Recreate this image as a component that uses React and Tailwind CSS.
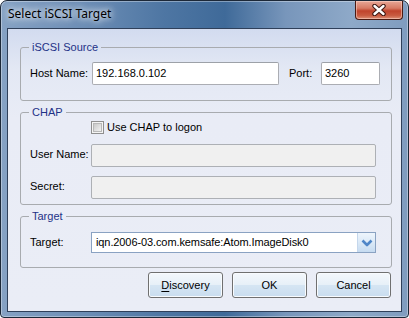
import React from 'react';

const sans = "font-['Liberation_Sans',Arial,sans-serif]";

function TextBox({ value, width, disabled }) {
  return (
    <div
      className={
        'h-[23px] rounded-[2px] border px-[3px] flex items-center text-[11px] text-black ' +
        width +
        (disabled
          ? ' border-[#adb0b5] bg-[#f0f0f0]'
          : ' border-[#abadb3] border-t-[#9da1a8] bg-white')
      }
    >
      {value}
    </div>
  );
}

function Group({ title, className, children }) {
  return (
    <fieldset className={'border border-[#a8abaf] rounded-[3px] ' + className}>
      <legend className="ml-[8px] px-[3px] text-[11px] leading-[14px] text-[#1e3287]">
        {title}
      </legend>
      {children}
    </fieldset>
  );
}

function DlgButton({ children }) {
  return (
    <button className="w-[75px] h-[26px] rounded-[3px] border border-[#707070] bg-[linear-gradient(180deg,#f4f8fc_0%,#e7f0f8_48%,#d5e5f3_52%,#c9ddef_100%)] shadow-[inset_0_0_0_1px_#f8fbfe] text-[11px] text-black">
      {children}
    </button>
  );
}

export default function App() {
  return (
    <div
      className={
        'w-[409px] h-[318px] flex flex-col border border-[#1c2838] rounded-t-[7px] rounded-b-[4px] bg-[linear-gradient(90deg,#86a2c4_0%,#6a8cb4_22%,#4e76a3_40%,#3f6a99_55%,#7896bb_70%,#8ea9c8_86%,#7f9cbf_100%)] shadow-[inset_0_0_0_1px_rgba(255,255,255,0.35)] ' +
        sans
      }
    >
      <div className="h-[27px] flex items-start shrink-0">
        <span className="ml-[7px] mt-[5px] text-[12px] leading-[16px] text-black font-['Noto_Sans',sans-serif] [text-shadow:0_0_6px_#ffffff,0_0_10px_rgba(255,255,255,0.9)]">
          Select iSCSI Target
        </span>
        <div className="ml-auto mr-[5px] w-[48px] h-[19px] rounded-b-[4px] border border-t-0 border-[#4a1a12] bg-[linear-gradient(180deg,#e8a797_0%,#d77a64_40%,#c0432c_55%,#c85a40_80%,#dc8f76_100%)] shadow-[inset_0_0_0_1px_rgba(255,220,210,0.5)] flex items-center justify-center">
          <svg width="14" height="12" viewBox="0 0 14 12">
            <path d="M2.5 2 L11.5 10 M11.5 2 L2.5 10" stroke="#3b1510" strokeWidth="4.4" strokeLinecap="round" />
            <path d="M2.5 2 L11.5 10 M11.5 2 L2.5 10" stroke="#ffffff" strokeWidth="2.4" strokeLinecap="round" />
          </svg>
        </div>
      </div>

      <div className="mx-[6px] mb-[5px] flex-1 flex flex-col border border-[#2f405a] bg-[linear-gradient(180deg,#d2dbef_0px,#e3e8f4_40px,#e9ecf6_90px,#eaedf6_100%)] pl-[12px] pr-[9px] pt-[11px]">
        <Group title="iSCSI Source" className="pt-[8px] pb-[15px]">
          <div className="flex items-center h-[23px] pl-[9px]">
            <span className="w-[62px] text-[11px]">Host Name:</span>
            <TextBox value="192.168.0.102" width="w-[187px]" />
            <span className="ml-[10px] w-[32px] text-[11px]">Port:</span>
            <TextBox value="3260" width="w-[59px]" />
          </div>
        </Group>

        <Group title="CHAP" className="mt-[4px] pt-[1px] pb-[5px]">
          <div className="flex items-center h-[14px] pl-[70px]">
            <span className="w-[13px] h-[13px] border border-[#8f8f8f] bg-[#f4f4f4] flex items-center justify-center">
              <span className="w-[9px] h-[9px] bg-[linear-gradient(135deg,#c9c9c9,#f2f2f2)] border border-[#b8b8b8]" />
            </span>
            <span className="ml-[3px] text-[11px]">Use CHAP to logon</span>
          </div>
          <div className="flex items-start mt-[10px] pl-[9px]">
            <span className="w-[61px] mt-[2px] text-[11px]">User Name:</span>
            <TextBox value="" width="w-[285px]" disabled />
          </div>
          <div className="flex items-start mt-[9px] pl-[9px]">
            <span className="w-[61px] mt-[2px] text-[11px]">Secret:</span>
            <TextBox value="" width="w-[285px]" disabled />
          </div>
        </Group>

        <Group title="Target" className="mt-[4px] pt-[9px] pb-[14px]">
          <div className="flex items-center pl-[9px]">
            <span className="w-[61px] text-[11px]">Target:</span>
            <div className="w-[285px] h-[21px] border border-[#8aa2c2] bg-white flex items-center">
              <span className="flex-1 pl-[4px] text-[11px] tracking-[-0.1px]">
                iqn.2006-03.com.kemsafe:Atom.ImageDisk0
              </span>
              <span className="w-[18px] h-[19px] border-l border-[#c5d7ec] bg-[linear-gradient(180deg,#eef5fc_0%,#dbe9f7_50%,#c6dbf1_100%)] flex items-center justify-center">
                <svg width="12" height="8" viewBox="0 0 12 8">
                  <path d="M1.5 1.5 L6 6 L10.5 1.5" fill="none" stroke="#4f86c8" strokeWidth="2.6" strokeLinejoin="round" />
                </svg>
              </span>
            </div>
          </div>
        </Group>

        <div className="mt-[4px] mr-[1px] flex justify-end gap-[9px]">
          <DlgButton>
            <span className="underline underline-offset-2">D</span>iscovery
          </DlgButton>
          <DlgButton>OK</DlgButton>
          <DlgButton>Cancel</DlgButton>
        </div>
      </div>
    </div>
  );
}
